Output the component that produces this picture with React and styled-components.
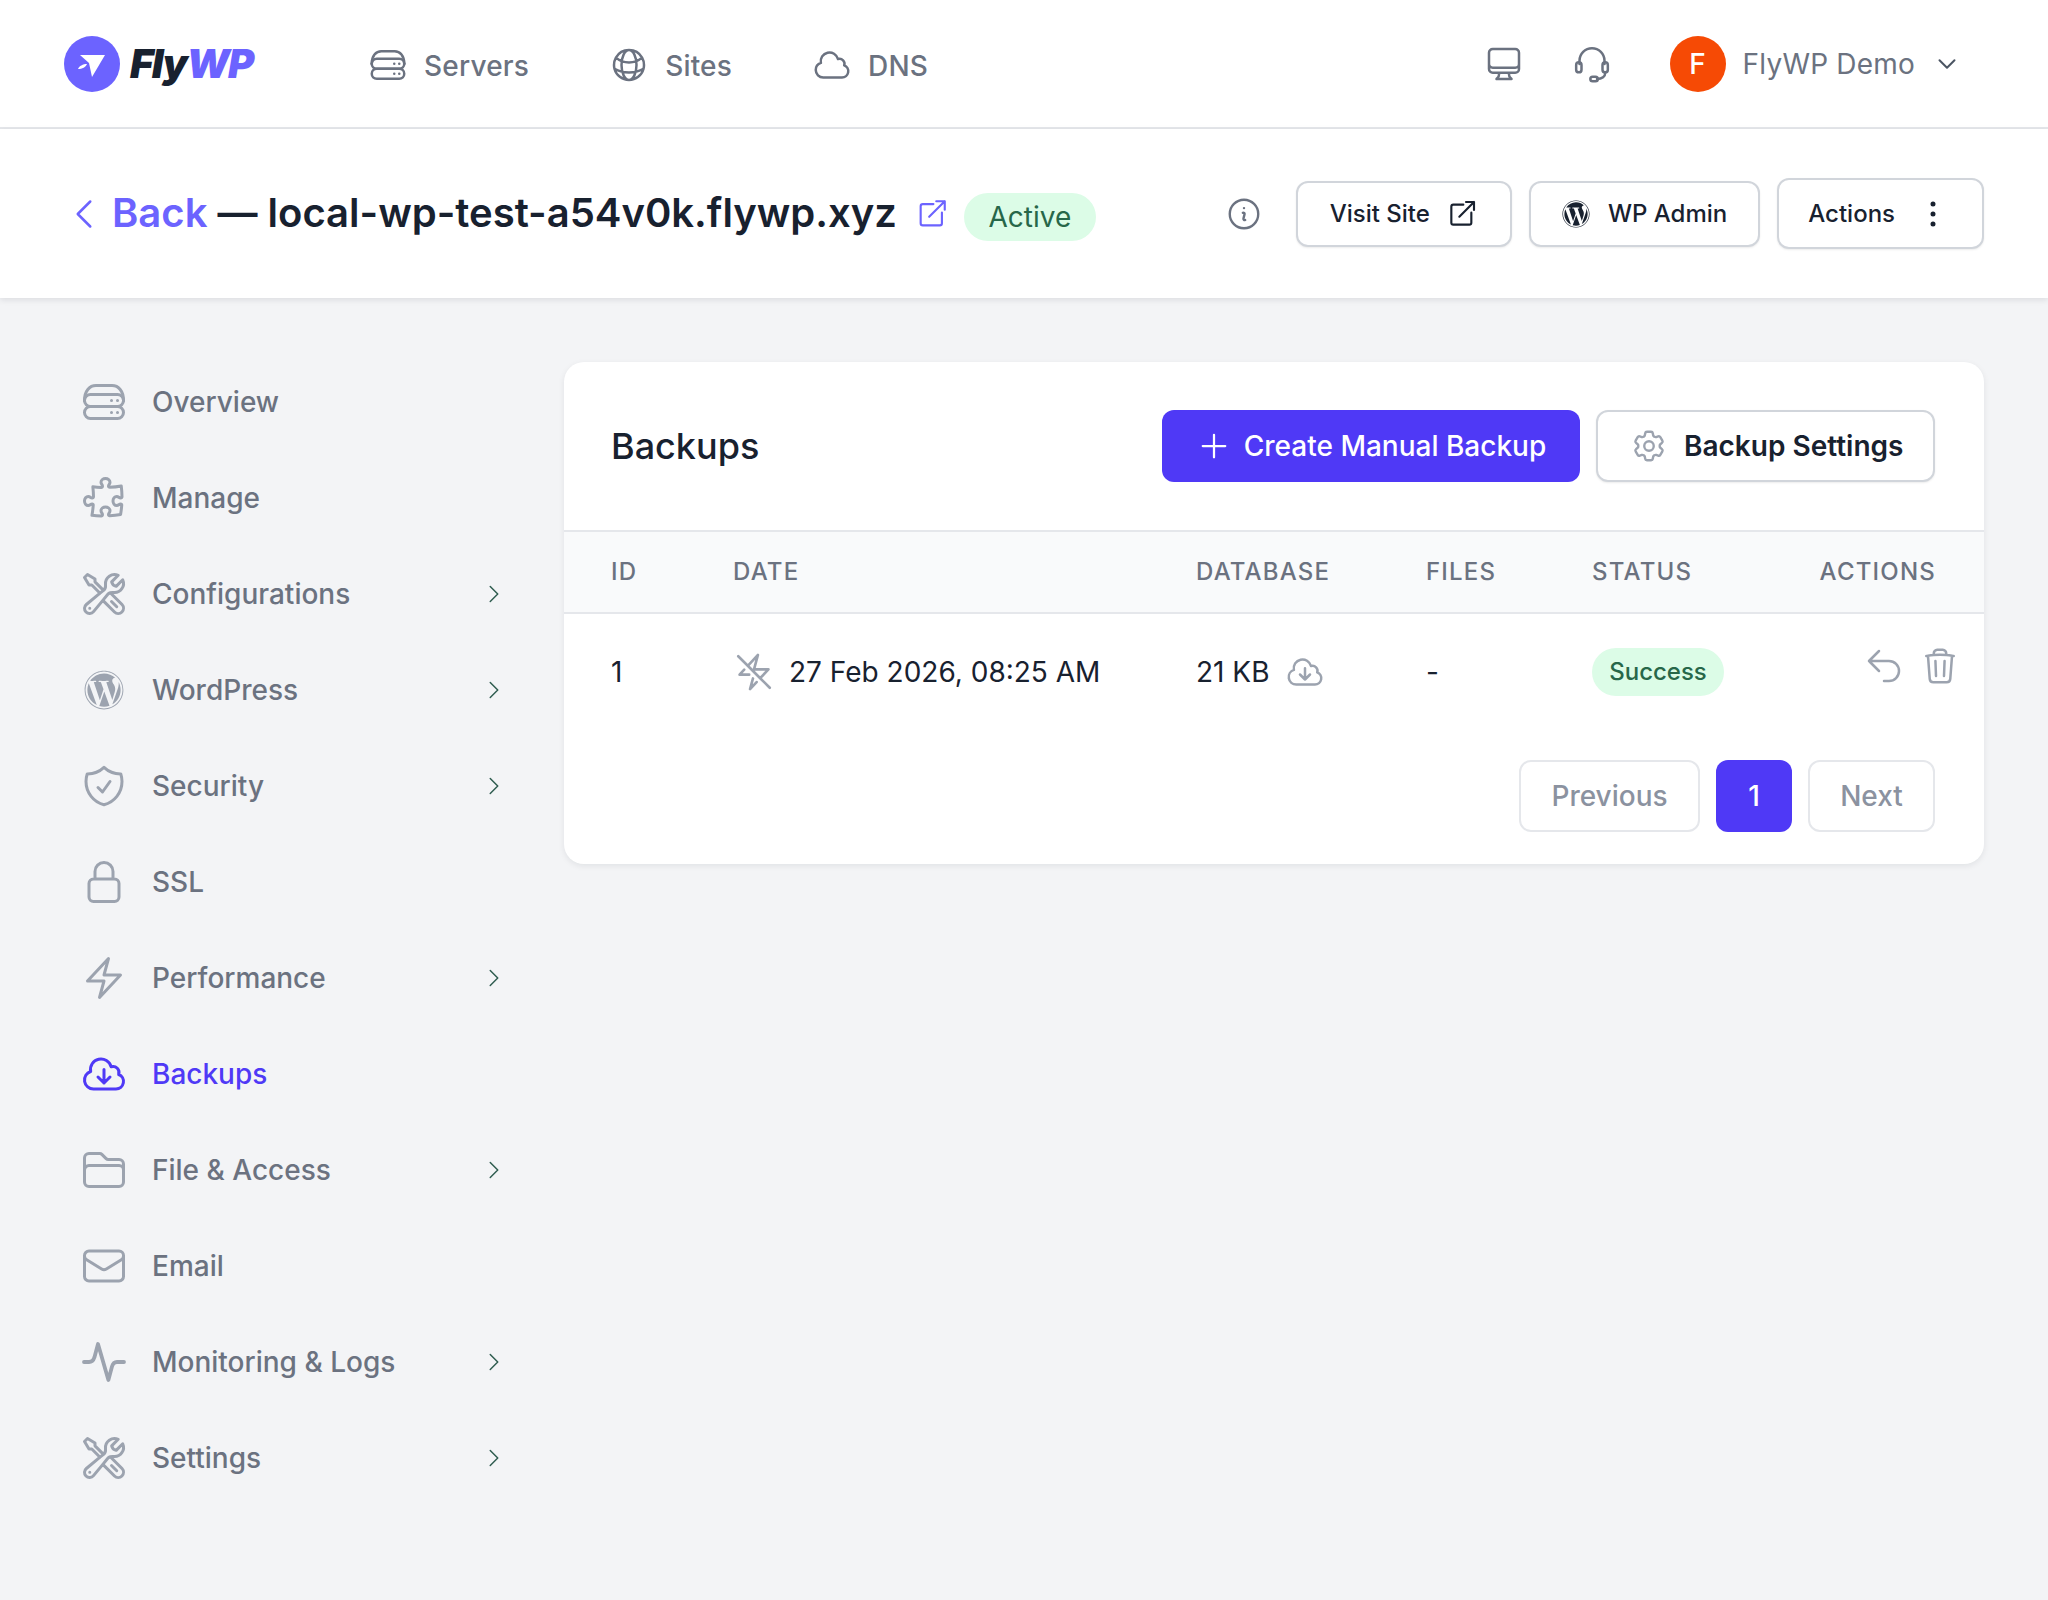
import React from "react";
import styled, { createGlobalStyle } from "styled-components";
import {
  HiOutlineGlobeAlt, HiOutlineCloud, HiOutlineComputerDesktop,
  HiOutlineChevronDown, HiOutlineChevronLeft, HiOutlineChevronRight, HiOutlineInformationCircle,
  HiOutlineEllipsisVertical, HiOutlinePuzzlePiece, HiOutlineWrenchScrewdriver, HiOutlineShieldCheck,
  HiOutlineLockClosed, HiOutlineBolt, HiOutlineCloudArrowDown, HiOutlineFolder, HiOutlineEnvelope,
  HiOutlinePlus, HiOutlineCog6Tooth, HiOutlineBoltSlash, HiOutlineArrowUturnLeft, HiOutlineTrash,
} from "react-icons/hi2";
import { FaWordpress } from "react-icons/fa";

const Global = createGlobalStyle`
  html, body { margin: 0; padding: 0; background: #f3f4f6; }
  body { font-family: Inter, "Liberation Sans", sans-serif; color: #111827; -webkit-font-smoothing: antialiased; }
  * { box-sizing: border-box; }
`;

const Page = styled.div`min-height: 1600px; background: #f3f4f6; display: flex; flex-direction: column;`;

const TopBar = styled.header`
  height: 129px; background: #fff; border-bottom: 2px solid #e5e7eb;
  display: flex; align-items: center; padding: 0 89px 0 64px;
`;
const Logo = styled.div`width: 194px; display: flex; align-items: center; gap: 10px;`;
const LogoText = styled.div`
  font-size: 40px; font-weight: 900; font-style: italic; letter-spacing: -1.6px; color: #18212f; line-height: 1;
  span { color: #6c63ff; }
`;
const MainNav = styled.nav`display: flex; align-items: center; gap: 80px; margin: 4px 0 0 110px;`;
const NavItem = styled.a`
  display: flex; align-items: center; gap: 16px; font-size: 28px; font-weight: 500; color: #6b7280; letter-spacing: .2px;
  svg { width: 40px; height: 40px; color: #6b7280; margin-top: -2px; }
`;
const TopRight = styled.div`margin-left: auto; display: flex; align-items: center;`;
const TopIcon = styled.span`
  width: 40px; height: 40px; margin-right: 48px; color: #6b7280; display: flex;
  svg { width: 100%; height: 100%; }
  &:nth-child(2) { margin-right: 58px; }
`;
const Avatar = styled.div`
  width: 56px; height: 56px; border-radius: 50%; background: #f64a05; color: #fff;
  display: flex; align-items: center; justify-content: center; font-size: 28px; font-weight: 500;
`;
const UserName = styled.span`margin-left: 17px; font-size: 28px; color: #6b7280; letter-spacing: .2px;`;
const UserChevron = styled(HiOutlineChevronDown)`width: 24px; height: 24px; margin-left: 20px; color: #4b5563; stroke-width: 2;`;

const SubBar = styled.section`
  height: 169px; background: #fff; box-shadow: 0 2px 6px rgba(17,24,39,.1);
  display: flex; align-items: center; padding: 0 64px; position: relative;
`;
const BackIcon = styled(HiOutlineChevronLeft)`width: 40px; height: 40px; color: #6c63ff; margin-right: 8px;`;
const Heading = styled.h1`
  margin: -2px 0 0; font-size: 40px; font-weight: 600; line-height: 48px; color: #18212f; white-space: nowrap;
`;
const BackLink = styled.span`color: #6c63ff;`;
const ExternalMark = styled.svg`width: 34px; height: 34px; margin-left: 18px; color: #6c63ff; flex: none;`;
const Pill = styled.span`
  display: inline-flex; align-items: center; justify-content: center; border-radius: 999px;
  background: #dcfce7; color: #276749;
`;
const ActivePill = styled(Pill)`width: 132px; height: 48px; margin: 6px 0 0 15px; font-size: 28px;`;
const SubActions = styled.div`margin-left: auto; display: flex; align-items: center; gap: 17px;`;
const InfoIcon = styled(HiOutlineInformationCircle)`width: 38px; height: 38px; color: #6b7280; margin-right: 16px;`;
const OutlineButton = styled.button`
  height: ${p => p.$h || 66}px; padding: 0 ${p => p.$pad || 32}px; background: #fff;
  border: 2px solid #d1d5db; border-radius: 12px; box-shadow: 0 1px 2px rgba(0,0,0,.08);
  display: flex; align-items: center; gap: ${p => p.$gap || 18}px;
  font: 500 24px Inter, sans-serif; color: #18212f; white-space: nowrap;
  svg { flex: none; }
`;

const Body = styled.div`display: flex; padding: 56px 64px 0 64px; align-items: flex-start;`;
const Sidebar = styled.aside`width: 442px; flex: none;`;
const SideRow = styled.a`
  height: 96px; display: flex; align-items: center; padding-left: 16px; font-size: 28px; gap: 24px;
  color: ${p => (p.$active ? "#4f39f6" : "#6b7280")}; font-weight: 500;
`;
const SideIcon = styled.span`
  width: 48px; height: 48px; flex: none; display: flex; align-items: center; justify-content: center;
  color: ${p => (p.$active ? "#4f39f6" : "#9ca3af")};
  svg { width: 48px; height: 48px; }
`;
const SideChevron = styled(HiOutlineChevronRight)`width: 24px; height: 24px; margin-left: auto; color: #2f5d50; flex: none;`;

const Card = styled.main`
  flex: 1; margin-top: 8px; margin-left: 58px; background: #fff; border-radius: 20px;
  box-shadow: 0 2px 6px rgba(17,24,39,.08); overflow: hidden; padding-bottom: 32px;
`;
const CardHead = styled.div`
  height: 168px; display: flex; align-items: center; padding: 0 49px 0 48px; gap: 16px;
`;
const CardTitle = styled.h2`margin: 0 auto 0 -1px; font-size: 36px; font-weight: 500; color: #18212f;`;
const PrimaryButton = styled.button`
  height: 72px; width: 418px; border: none; border-radius: 12px; background: #4f39f6; color: #fff;
  display: flex; align-items: center; justify-content: center; gap: 12px;
  font: 500 28px Inter, sans-serif;
  svg { width: 36px; height: 36px; }
`;
const SettingsButton = styled(OutlineButton)`
  height: 72px; width: 339px; padding: 0 32px; gap: 16px; font-size: 28px; font-weight: 600;
  svg { width: 38px; height: 38px; color: #9ca3af; }
`;
const cols = "122px 463px 230px 166px 1fr auto";
const TableHead = styled.div`
  height: 84px; display: grid; grid-template-columns: ${cols}; align-items: center; padding: 0 48px 2px 47px;
  background: #f9fafb; border-top: 2px solid #e5e7eb; border-bottom: 2px solid #e5e7eb;
  font-size: 24px; font-weight: 500; letter-spacing: 1.2px; color: #6b7280; text-transform: uppercase;
`;
const TableRow = styled.div`
  height: 115px; display: grid; grid-template-columns: ${cols}; align-items: center; padding: 0 48px 0 47px;
  font-size: 28px; color: #18212f;
`;
const DateCell = styled.div`
  display: flex; align-items: center; gap: 14px;
  svg { width: 42px; height: 42px; color: #9ca3af; }
`;
const DbCell = styled.div`
  display: flex; align-items: center; gap: 16px;
  svg { width: 40px; height: 40px; color: #9ca3af; }
`;
const SuccessPill = styled(Pill)`width: 132px; height: 48px; font-size: 24px; font-weight: 500;`;
const RowActions = styled.div`
  display: flex; gap: 16px; margin: -12px -24px 0 0; color: #9ca3af;
  svg { width: 40px; height: 40px; }
`;
const Pager = styled.div`display: flex; justify-content: flex-end; gap: 16px; padding: 0 49px 0 48px; margin-top: 31px;`;
const PageButton = styled.button`
  height: 72px; width: ${p => p.$w}px; padding: 0; border-radius: 12px; font: 500 28px Inter, sans-serif;
  background: ${p => (p.$on ? "#4f39f6" : "#fff")}; color: ${p => (p.$on ? "#fff" : "#8b92a0")};
  border: ${p => (p.$on ? "none" : "2px solid #e5e7eb")};
`;

const ServerIcon = () => (
  <svg viewBox="0 0 24 24" fill="none" stroke="currentColor" strokeWidth="1.5" strokeLinecap="round" strokeLinejoin="round">
    <rect x="2.25" y="14.25" width="19.5" height="6" rx="3" />
    <path d="M2.25 11.25a3 3 0 0 0 3 3h13.5a3 3 0 0 0 3-3" />
    <path d="M2.25 11.25C2.25 6.5 4.75 3.75 8 3.75h8c3.25 0 5.75 2.75 5.75 7.5" />
    <path d="M2.25 11.25a3 3 0 0 1 3-3h13.5a3 3 0 0 1 3 3" />
    <path d="M15.75 11.25h.01M18.75 11.25h.01M15.75 17.25h.01M18.75 17.25h.01" />
  </svg>
);
const PulseIcon = () => (
  <svg viewBox="0 0 24 24" fill="none" stroke="currentColor" strokeWidth="1.9" strokeLinecap="round" strokeLinejoin="round">
    <path d="M2 12h2.5c1.4 0 2.2-.8 2.7-2.3L9 3l5.2 18 1.8-6.7c.4-1.5 1.3-2.3 2.5-2.3H22" />
  </svg>
);
const External = () => (
  <>
    <path d="M13 5H5.5A1.5 1.5 0 0 0 4 6.5v12A1.5 1.5 0 0 0 5.5 20h12a1.5 1.5 0 0 0 1.5-1.5V11" />
    <path d="M10 14 21 3M15 3h6v6" />
  </>
);
const Headset = () => (
  <svg viewBox="0 0 24 24" fill="none" stroke="currentColor" strokeWidth="1.5" strokeLinecap="round" strokeLinejoin="round">
    <path d="M4.5 12V10a7.5 7.5 0 0 1 15 0v2" />
    <rect x="2.5" y="11" width="3.2" height="6" rx="1.6" />
    <rect x="18.3" y="11" width="3.2" height="6" rx="1.6" />
    <path d="M20 17c0 2.5-2 4-5 4" />
    <rect x="11" y="19.6" width="4.5" height="2.8" rx="1.4" />
  </svg>
);
const LogoMark = () => (
  <svg width="56" height="56" viewBox="0 0 56 56">
    <circle cx="28" cy="28" r="28" fill="#6c63ff" />
    <path d="M16 19h25L28 41l-3-14z" fill="#fff" />
    <path d="M14 33c1-3 5-5 9-5-1 3-5 5-9 5z" fill="#fff" />
  </svg>
);

const items = [
  ["Overview", <ServerIcon />, false],
  ["Manage", <HiOutlinePuzzlePiece />, false],
  ["Configurations", <HiOutlineWrenchScrewdriver />, true],
  ["WordPress", <FaWordpress style={{ width: 40, height: 40 }} />, true],
  ["Security", <HiOutlineShieldCheck />, true],
  ["SSL", <HiOutlineLockClosed />, false],
  ["Performance", <HiOutlineBolt />, true],
  ["Backups", <HiOutlineCloudArrowDown />, false, true],
  ["File & Access", <HiOutlineFolder />, true],
  ["Email", <HiOutlineEnvelope />, false],
  ["Monitoring & Logs", <PulseIcon />, true],
  ["Settings", <HiOutlineWrenchScrewdriver />, true],
];

export default function App() {
  return (
    <Page>
      <Global />
      <TopBar>
        <Logo>
          <LogoMark />
          <LogoText>Fly<span>WP</span></LogoText>
        </Logo>
        <MainNav>
          <NavItem><ServerIcon />Servers</NavItem>
          <NavItem><HiOutlineGlobeAlt />Sites</NavItem>
          <NavItem><HiOutlineCloud />DNS</NavItem>
        </MainNav>
        <TopRight>
          <TopIcon><HiOutlineComputerDesktop /></TopIcon>
          <TopIcon><Headset /></TopIcon>
          <Avatar>F</Avatar>
          <UserName>FlyWP Demo</UserName>
          <UserChevron />
        </TopRight>
      </TopBar>
      <SubBar>
        <BackIcon />
        <Heading><BackLink>Back</BackLink> — local-wp-test-a54v0k.flywp.xyz</Heading>
        <ExternalMark viewBox="0 0 24 24" fill="none" stroke="currentColor" strokeWidth="1.5" strokeLinecap="round" strokeLinejoin="round"><External /></ExternalMark>
        <ActivePill>Active</ActivePill>
        <SubActions>
          <InfoIcon />
          <OutlineButton $gap={16}>Visit Site
            <svg width="32" height="32" viewBox="0 0 24 24" fill="none" stroke="currentColor" strokeWidth="1.6" strokeLinecap="round" strokeLinejoin="round"><External /></svg>
          </OutlineButton>
          <OutlineButton $pad={31}><FaWordpress size={28} />WP Admin</OutlineButton>
          <OutlineButton $h={71} $pad={29} $gap={18}>Actions<HiOutlineEllipsisVertical size={40} /></OutlineButton>
        </SubActions>
      </SubBar>
      <Body>
        <Sidebar>
          {items.map(([label, icon, chev, active]) => (
            <SideRow key={label} $active={active}>
              <SideIcon $active={active}>{icon}</SideIcon>
              {label}
              {chev && <SideChevron />}
            </SideRow>
          ))}
        </Sidebar>
        <Card>
          <CardHead>
            <CardTitle>Backups</CardTitle>
            <PrimaryButton><HiOutlinePlus />Create Manual Backup</PrimaryButton>
            <SettingsButton><HiOutlineCog6Tooth />Backup Settings</SettingsButton>
          </CardHead>
          <TableHead>
            <span>ID</span><span>Date</span><span>Database</span><span>Files</span><span>Status</span><span>Actions</span>
          </TableHead>
          <TableRow>
            <span>1</span>
            <DateCell><HiOutlineBoltSlash />27 Feb 2026, 08:25 AM</DateCell>
            <DbCell>21 KB<HiOutlineCloudArrowDown /></DbCell>
            <span>-</span>
            <span><SuccessPill>Success</SuccessPill></span>
            <RowActions><HiOutlineArrowUturnLeft /><HiOutlineTrash /></RowActions>
          </TableRow>
          <Pager>
            <PageButton $w={181}>Previous</PageButton>
            <PageButton $on $w={76}>1</PageButton>
            <PageButton $w={127}>Next</PageButton>
          </Pager>
        </Card>
      </Body>
    </Page>
  );
}
